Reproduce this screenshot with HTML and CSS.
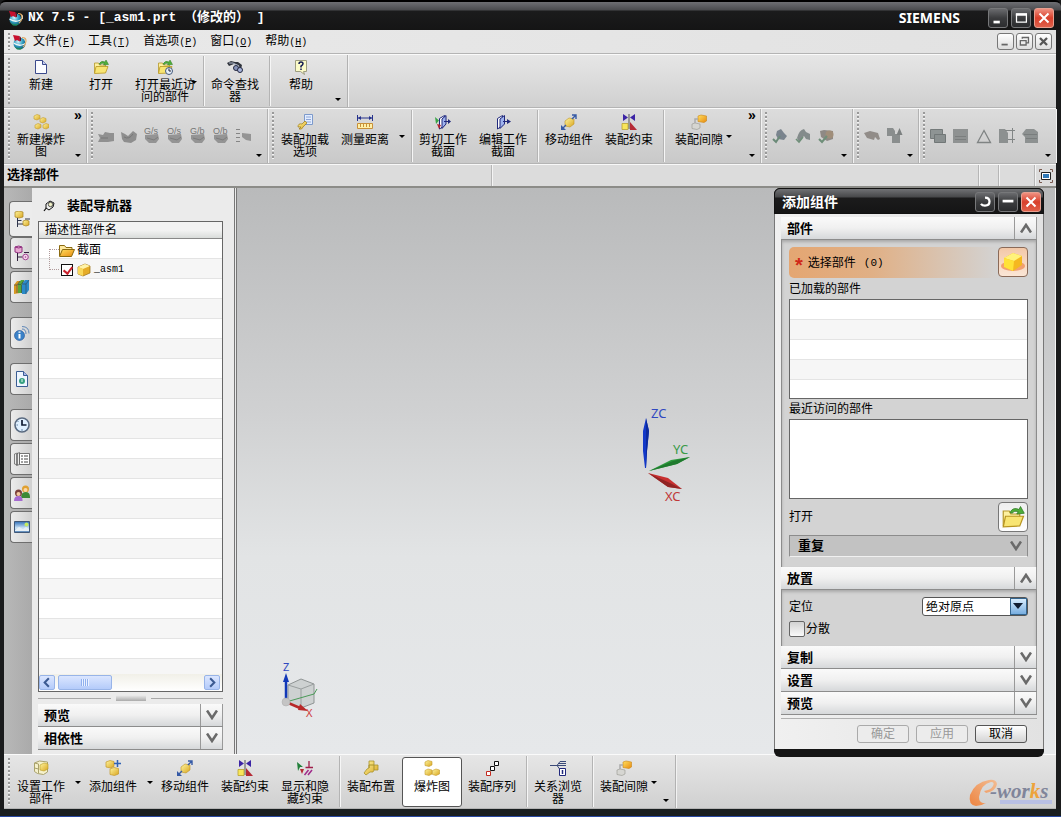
FILE: index.html
```html
<!DOCTYPE html>
<html lang="zh-CN">
<head>
<meta charset="utf-8">
<title>NX 7.5</title>
<link rel="stylesheet" href="styles.css">
</head>
<body>
<svg class="sprite" aria-hidden="true">
  <defs>
    <linearGradient id="gold" x1="0" y1="0" x2="1" y2="1"><stop offset="0" stop-color="#fff6a0"/><stop offset="1" stop-color="#d9a520"/></linearGradient>
    <linearGradient id="orange" x1="0" y1="0" x2="1" y2="1"><stop offset="0" stop-color="#ffe060"/><stop offset="1" stop-color="#e88a10"/></linearGradient>
    <linearGradient id="swoosh" x1="0" y1="1" x2="1" y2="0"><stop offset="0" stop-color="#ee8440"/><stop offset="1" stop-color="#f2bd94"/></linearGradient>
    <linearGradient id="sky" x1="0" y1="0" x2="0" y2="1"><stop offset="0" stop-color="#2f6fb8"/><stop offset=".6" stop-color="#cfe6f8"/><stop offset="1" stop-color="#4a7ab0"/></linearGradient>
    <radialGradient id="globe" cx=".4" cy=".35" r=".7"><stop offset="0" stop-color="#d8f4fa"/><stop offset=".5" stop-color="#36a3c4"/><stop offset="1" stop-color="#0a4f78"/></radialGradient>
  </defs>
  <symbol id="i-nx" viewBox="0 0 16 16"><circle cx="8.500" cy="9.500" r="6" fill="url(#globe)"/><path d="M3 12q4 4 9 1l-2 2.500H6z" fill="#1d8a58"/><path d="M2.500 9q5 3.500 10 1.500T14.500 5" stroke="#f0f6f8" stroke-width="1.300" fill="none"/><path d="M2 1l6.500 1 .5 5.500-3-1.500-2 1z" fill="#c8102e"/><path d="M8.500 2l1.500 1.500v3L9 7.500z" fill="#6a0818"/><path d="M11 3.500q4.500 0 4 4t-3 5.500" stroke="#e0a860" stroke-width="1.200" fill="none"/></symbol>
  <symbol id="i-new" viewBox="0 0 16 16"><path d="M2.500 1.500h7l4 4v9h-11z" fill="#fbfcff" stroke="#3b4a8c"/><path d="M9.500 1.500v4h4" fill="#c8d0f0" stroke="#3b4a8c"/></symbol>
  <symbol id="i-open" viewBox="0 0 16 16"><path d="M1.500 14V4h4l1 2h6v3" fill="#fdf0a0" stroke="#b5982c" stroke-width=".8"/><path d="M1.500 14.500l1.500-7h12l-2.500 6.500z" fill="#f8e573" stroke="#b89520" stroke-width=".8"/><path d="M6 5q2-4 6-2l1-2 2.500 4.500-5 .5 1-1.500q-3-1-4 1z" fill="#4fae3a" stroke="#2c7a22" stroke-width=".5"/></symbol>
  <symbol id="i-recent" viewBox="0 0 16 16"><use href="#i-open"/><circle cx="12" cy="12" r="3.500" fill="#e6f0fa" stroke="#44597a"/><path d="M12 9.500V12h2" stroke="#223" fill="none"/></symbol>
  <symbol id="i-find" viewBox="0 0 16 16"><path d="M0 4l4-2 4 1 3 0 4 3-1 4-3-4-4-1-5 2z" fill="#30343c"/><path d="M2 4l4 0 6 3" stroke="#aab4c8" fill="none"/><circle cx="9" cy="9" r="2.500" fill="#8793b8" stroke="#222840"/><circle cx="13" cy="11" r="2.500" fill="#aab6dd" stroke="#222840"/></symbol>
  <symbol id="i-help" viewBox="0 0 16 16"><path d="M2.500 1.500h11v11h-3l1 3-4-3h-5z" fill="#fbfbc8" stroke="#9d9d80"/><path d="M6 5q0-2 2-2t2 1.800q0 1.200-2 2.400v1.300M8 9.500v1.500" stroke="#111a50" stroke-width="1.500" fill="none"/></symbol>
  <symbol id="i-cube" viewBox="0 0 16 16"><path d="M2 5l7-3 5 2v7l-7 3-5-2z" fill="#e5ac28" stroke="#9a6f10" stroke-width=".7"/><path d="M2 5l7-3 5 2-7 3z" fill="#fff3a8"/><path d="M2 5l5 2v7l-5-2z" fill="#f9d85a"/></symbol>
  <symbol id="i-boxes" viewBox="0 0 16 16"><g fill="url(#gold)" stroke="#c49a2a" stroke-width=".6"><path d="M1 2l3-1.500 4 1v3.500L5 6.500 1 5.500z"/><path d="M1 10.500L4 9l4 1v4l-3 1.500-4-1z"/><path d="M8.500 10.500L12 9l3.500 1v4L12 15.500l-3.500-1z"/></g></symbol>
  <symbol id="i-explode" viewBox="0 0 16 16"><g fill="url(#gold)" stroke="#c49a2a" stroke-width=".6"><path d="M1 2l3-1.500 3 1v3l-3 1.500-3-1z"/><path d="M7 5l3-1.500 3 1v3l-3 1.500-3-1z"/><path d="M2 11l3-1.500 3 1v3l-3 1.500-3-1z"/><path d="M10 11l3-1.500 3 1v3l-3 1.500-3-1z"/></g></symbol>
  <symbol id="i-load" viewBox="0 0 16 16"><path d="M7.500 .5h8v10h-8z" fill="#e3edff" stroke="#7d9acb"/><path d="M9 3h5M9 5.500h5M9 8h5" stroke="#8ea6d6"/><path d="M1 13q0-4 4-3l3-3 2 2-4 4q-1 3-4 2l2-2z" fill="url(#gold)" stroke="#9c7a18" stroke-width=".7"/></symbol>
  <symbol id="i-measure" viewBox="0 0 16 16"><path d="M.5 1v6M15.500 1v6M1 4h14" stroke="#26328c" fill="none"/><path d="M1 4l3-2v4zM15 4l-3-2v4z" fill="#26328c"/><path d="M.5 9.500h15v5H.5z" fill="#fff0a8" stroke="#c8903a"/><path d="M3.500 10v3M6.500 10v3M9.500 10v3M12.500 10v3" stroke="#c8903a"/></symbol>
  <symbol id="i-section" viewBox="0 0 16 16"><path d="M2.500 4.500l5-3v10l-5 3.500z" fill="#fff" stroke="#20287c"/><path d="M5 5l4.500-3.500V10L5 14.500z" fill="#9fb3ee" stroke="#20287c"/><path d="M8 7h4V5l4 2.500-4 2.500V8H8z" fill="#20287c"/></symbol>
  <symbol id="i-clip" viewBox="0 0 16 16"><path d="M4.500 4.500l5-3v10l-5 3.500z" fill="#fff" stroke="#20287c"/><path d="M7 5l4-3.500V10l-4 4.500z" fill="#9fb3ee" stroke="#20287c"/><path d="M9 7h4V5l3 2.500-3 2.500V8H9z" fill="#20287c"/><path d="M0 3l4 3.500L1 10z" fill="#39a447"/><path d="M2 10l4 1-2 4z" fill="#b32330"/></symbol>
  <symbol id="i-move" viewBox="0 0 16 16"><path d="M4 7l4-3 5 1v5l-4 3-5-1z" fill="url(#gold)" stroke="#c09524" stroke-width=".6"/><path d="M11 5l4-4M11 1h4v4M5 11l-3 3" stroke="#365aa6" fill="none" stroke-width="1.400"/><path d="M0 11v5h5z" fill="#365aa6"/></symbol>
  <symbol id="i-constrain" viewBox="0 0 16 16"><path d="M2 0l5 3.500L2 7zM14 0L9 3.500 14 7z" fill="#3c24a5"/><path d="M8 0v15" stroke="#555"/><path d="M1 9.500h6v6H1z" fill="#f8e65a" stroke="#b8a230" stroke-width=".8"/><path d="M9 8l7 8H9z" fill="#b52a35"/></symbol>
  <symbol id="i-clear" viewBox="0 0 16 16"><path d="M7 2l3-1 5.500 1v5l-2.500 1.500L7 7.500z" fill="url(#orange)" stroke="#c98618" stroke-width=".6"/><path d="M1 10l3-1 5 1v4l-3 1.500-5-1z" fill="#d6d6d2" stroke="#96968f" stroke-width=".6"/><path d="M4 9V5h3" stroke="#aaa" stroke-width="1.500" fill="none"/></symbol>
  <symbol id="i-setwork" viewBox="0 0 16 16"><path d="M1.500 3l5-2 8 1v10l-4 2.500-6-1-3-2z" fill="#f5f1cc" stroke="#a9a26c"/><path d="M7 5l4-2 4 1v5l-4 2-4-1z" fill="url(#gold)" stroke="#b79a24" stroke-width=".6"/><path d="M1.500 3l4 1v9M5.500 9l-4-1" stroke="#a9a26c" fill="none"/></symbol>
  <symbol id="i-add" viewBox="0 0 16 16"><g fill="url(#gold)" stroke="#c49a2a" stroke-width=".7"><path d="M1 2l4-1.500 4 1v5L5.500 8 1 7z"/><path d="M5 9l4-1.500 4.500 1V14L9.500 15.500 5 14.500z"/></g><path d="M12.500 0v7M9 3.500h7" stroke="#2f62b5" stroke-width="1.500"/></symbol>
  <symbol id="i-showhide" viewBox="0 0 16 16"><path d="M0 2l6 5-3 0-2 4z" fill="#22803a"/><path d="M3 9h4l-2 5z" fill="#b52a35"/><path d="M12 1v6M8.500 7.500H16" stroke="#a01e4a" stroke-width="1.300"/><path d="M7.500 15l4-5M11 15l4-5" stroke="#a02a8a" stroke-width="1.500"/></symbol>
  <symbol id="i-arrange" viewBox="0 0 16 16"><path d="M6 5V1h5v4h4v5h-4l-1 2H7l-4 3-2-2 3-4 2-1z" fill="url(#gold)" stroke="#a8932c" stroke-width=".8"/><path d="M6 5h5v5M6 5v3" stroke="#a8932c" fill="none"/></symbol>
  <symbol id="i-sequence" viewBox="0 0 16 16"><path d="M10.500 1.500h4v4h-4z" fill="#fff" stroke="#111"/><path d="M6.500 6.500h4v4h-4z" fill="#fff" stroke="#111"/><path d="M2.500 11.500h4v4h-4z" fill="#fff" stroke="#c32a20"/></symbol>
  <symbol id="i-browse" viewBox="0 0 16 16"><path d="M0 5.500h7l3-4h6M7 5.500h9M7 5.500l3 4M9 3.500h7" stroke="#3a4a78" fill="none"/><path d="M9.500 8.500h6v7h-6z" fill="#fff" stroke="#20287c"/><path d="M12.500 10v4" stroke="#20287c" stroke-width="1.500"/></symbol>
  <symbol id="g-hand" viewBox="0 0 16 16"><path d="M0 6l5 1 2-3 5 1 4 0v8l-6 1H0l2-4z" fill="#909090"/><path d="M3 10h7" stroke="#777"/></symbol>
  <symbol id="g-cup" viewBox="0 0 16 16"><path d="M0 4l4 2 3 2 5-5 4 3-1 6-5 3-7-1-2-3z" fill="#8e8e8e"/><path d="M3 9q5 3 9-3" stroke="#777" fill="none"/></symbol>
  <symbol id="g-ball" viewBox="0 0 16 16"><path d="M1 7l13-1 1 5-3 4H5l-4-4z" fill="#949494"/><path d="M3 10l7 2 4-3" stroke="#7c7c7c" fill="none"/></symbol>
  <symbol id="g-list" viewBox="0 0 16 16"><path d="M0 1.500h4M0 5.500h4M0 9.500h4M0 13.500h4" stroke="#858585"/><path d="M6 5l9 1v7l-5-1-4-3z" fill="#949494"/></symbol>
  <symbol id="g-check1" viewBox="0 0 16 16"><path d="M5 3l4-2 3 4 3 3-3 4-6-1-2-4z" fill="#7a848e"/><path d="M1 11l3 3 4-6" stroke="#6b8a78" stroke-width="2" fill="none"/></symbol>
  <symbol id="g-check2" viewBox="0 0 16 16"><path d="M2 10q2-8 7-9l2 3 4 2 0 6-4-1-2-3-5 6z" fill="#838b8b"/><path d="M1 11l3 3 4-5" stroke="#6f8f79" stroke-width="1.600" fill="none"/></symbol>
  <symbol id="g-check3" viewBox="0 0 16 16"><path d="M2 3l4-1 9 1v8l-6 2-6-4z" fill="#8e8985"/><circle cx="11.500" cy="6.500" r="4" fill="#a08e7a"/><path d="M1 11l3 3 5-6" stroke="#6f8f79" stroke-width="2" fill="none"/></symbol>
  <symbol id="g-part" viewBox="0 0 16 16"><path d="M0 5l6-2 8 2 2 6-2 1-3-3-1 3-7-2z" fill="#918c88"/></symbol>
  <symbol id="g-copy" viewBox="0 0 16 16"><path d="M0 0h6l2 3v3h5v9H5V8H0z" fill="#8a8e8e"/><path d="M12.500 0l3 7h-6z" fill="#7c8080"/></symbol>
  <symbol id="g-layer" viewBox="0 0 16 16"><path d="M.5 1.500h12v9H.5z" fill="#8e9494" stroke="#747a7a"/><path d="M4.500 6.500h11v8h-11z" fill="#8a9090" stroke="#717777"/></symbol>
  <symbol id="g-block" viewBox="0 0 16 16"><path d="M0 1h15v14H0z" fill="#8f9292"/><path d="M2 8.500h11M2 11.500h11" stroke="#7b7e7e"/></symbol>
  <symbol id="g-tri" viewBox="0 0 16 16"><path d="M8 2.500l6.500 12h-13z" fill="none" stroke="#7f8383" stroke-width="1.300"/></symbol>
  <symbol id="g-trim" viewBox="0 0 16 16"><path d="M0 1h6l3 4v10H0z" fill="#8c9090"/><path d="M6 2.500h10M9 11.500h7M13.500 0v15" stroke="#818585"/></symbol>
  <symbol id="g-stack" viewBox="0 0 16 16"><path d="M0 6l4-5h8l4 3v11H3V9z" fill="#8d9191"/><path d="M2 6.500h13M4 10.500h11" stroke="#797d7d"/></symbol>
  <symbol id="i-full" viewBox="0 0 16 16"><path d="M1.500 4V1.500H4M12 1.500h2.500V4M14.500 12v2.500H12M4 14.500H1.500V12" stroke="#7a5a50" fill="none"/><path d="M3.500 4.500h9v7h-9z" fill="#fff" stroke="#222"/><path d="M5 6h6v4H5z" fill="#2f79b8"/></symbol>
  <symbol id="i-asm" viewBox="0 0 16 16"><path d="M1 1l4-1 4 1v5l-4 1-4-1z" fill="url(#gold)" stroke="#a8811c" stroke-width=".7"/><path d="M3.500 7v9M3.500 13h6M3.500 9.500h4M11 8h5" stroke="#30364c" fill="none"/><path d="M9 10l3-1 3 1v4l-3 1-3-1z" fill="url(#gold)" stroke="#a8811c" stroke-width=".7"/></symbol>
  <symbol id="i-cnav" viewBox="0 0 16 16"><path d="M1 2q4-2 7 0v5q-3 2-7 0z" fill="#e6a8d0" stroke="#903080"/><path d="M1 2q4 2 7 0" stroke="#903080" fill="none"/><path d="M3.500 8v8M3.500 12h5M10 7.500h5" stroke="#30203c" fill="none"/><circle cx="11.500" cy="12" r="2.800" fill="#f4d8ec" stroke="#a04090"/><circle cx="11.500" cy="12" r=".8" fill="#a04090"/></symbol>
  <symbol id="i-books" viewBox="0 0 16 16"><path d="M0 6l3-4h3v12l-6 1z" fill="#d89820"/><path d="M4 5l3-4h3l-2 13H4z" fill="#58a838"/><path d="M8 5l3-4h4v10l-3 4H8z" fill="#2a8ac8"/><path d="M0 6h3l3-4M4 5.500h3l3-4M8 5h4l3-4M12 5v10M7.500 6v8M3 6v8" stroke="#345" stroke-width=".6" fill="none"/></symbol>
  <symbol id="i-info" viewBox="0 0 16 16"><circle cx="5.500" cy="10.500" r="5" fill="#3b82c8" stroke="#1e4f94" stroke-width=".6"/><path d="M5.500 9v4.500M5.500 6.500v1.300" stroke="#fff" stroke-width="2"/><path d="M8 4q4 0 4 5M8 1.500q7 0 7 7" stroke="#6088b8" fill="none"/></symbol>
  <symbol id="i-page" viewBox="0 0 16 16"><path d="M2.500 .5h7l4 4v11h-11z" fill="#eef6ff" stroke="#3a5d94"/><path d="M9.500 .5v4h4" fill="#a9b6ea" stroke="#3a5d94"/><circle cx="8" cy="10" r="3" fill="#36a080"/><path d="M8 8v3" stroke="#e8fff4"/></symbol>
  <symbol id="i-clock" viewBox="0 0 16 16"><circle cx="8" cy="8" r="7" fill="#e0f0ff" stroke="#5a6a80" stroke-width="1.600"/><path d="M8 3v5h4.500" stroke="#101c34" stroke-width="1.700" fill="none"/><path d="M8 12v2M2.500 8h1.500M12 12l1 1M4 12l-1 1M3.500 4l1 1" stroke="#68a"/></symbol>
  <symbol id="i-roles" viewBox="0 0 16 16"><path d="M.5 3l3-1v12l-3-1zM2.500 3l3-1.500v12l-3 1z" fill="#eee" stroke="#666" stroke-width=".8"/><path d="M5.500 2.500h10v11h-10z" fill="#fff" stroke="#555" stroke-width=".8"/><path d="M7 5h2M7 8h2M7 11h2M10 5h4M10 8h4M10 11h4" stroke="#444"/></symbol>
  <symbol id="i-people" viewBox="0 0 16 16"><circle cx="11.500" cy="4" r="3.500" fill="#e0a030"/><circle cx="11.500" cy="5" r="2" fill="#fbd8a8"/><path d="M7 13q0-6 4.500-6T16 12v1z" fill="#3b8a35"/><circle cx="4.500" cy="8" r="3.500" fill="#7a3f3a"/><circle cx="4.500" cy="9" r="2" fill="#f4c8a0"/><path d="M0 16q0-5 4.500-5T8.500 16z" fill="#a56ad0"/></symbol>
  <symbol id="i-photo" viewBox="0 0 16 16"><path d="M.5 2.500h15v11H.5z" fill="url(#sky)" stroke="#405878"/><path d="M1 11l4-3 4 2 3-2 3 2v2H1z" fill="#e7f0f6"/><circle cx="12.500" cy="5.500" r="2" fill="#c5ec60"/></symbol>
  <symbol id="i-pin" viewBox="0 0 12 12"><path d="M1 11l3-4" stroke="#111" stroke-width="1.200"/><path d="M3 4l4-3 4 2-1 4-4 3-3-2z" fill="#eee" stroke="#111"/><circle cx="7.500" cy="4.500" r="2.200" fill="#f3f3c8" stroke="#333" stroke-width=".8"/></symbol>
  <symbol id="i-folder" viewBox="0 0 16 14"><path d="M.5 13V2.500h5l1.500 2h6V7" fill="#ffe9a0" stroke="#8a6a10"/><path d="M.5 13.500l3-7h12l-3 7z" fill="url(#orange)" stroke="#8a6a10"/></symbol>
  <symbol id="i-down" viewBox="0 0 12 10"><path d="M1 .5l5 7.500 5-7.500" fill="none" stroke="#6a6a6a" stroke-width="2.600"/></symbol>
  <symbol id="i-up" viewBox="0 0 12 10"><path d="M1 9.500L6 2l5 7.500" fill="none" stroke="#6a6a6a" stroke-width="2.600"/></symbol>
  <symbol id="w-min" viewBox="0 0 20 20"><path d="M5 13h7v3H5z" fill="#fff"/></symbol>
  <symbol id="w-max" viewBox="0 0 20 20"><path d="M5 5.500h11v9H5z" fill="none" stroke="#fff" stroke-width="1.400"/><path d="M4.300 5h12.400v2.500H4.300z" fill="#fff"/></symbol>
  <symbol id="w-close" viewBox="0 0 20 20"><path d="M5 5l10 10M15 5L5 15" stroke="#fff" stroke-width="2.200"/></symbol>
  <symbol id="w-reset" viewBox="0 0 20 20"><path d="M10 5q5 0 5 4.500T10 14q-3 0-4.500-2" stroke="#fff" stroke-width="2.500" fill="none"/></symbol>
  <symbol id="w-dash" viewBox="0 0 20 20"><path d="M4 7.500h12v3H4z" fill="#fff"/></symbol>
</svg>

<header class="titlebar">
  <svg class="icon"><use href="#i-nx"/></svg>
  <h1>NX 7.5 - [_asm1.prt （修改的） ]</h1>
  <span class="brand">SIEMENS</span>
  <div class="win-buttons">
    <button class="win" aria-label="最小化"><svg><use href="#w-min"/></svg></button>
    <button class="win" aria-label="最大化"><svg><use href="#w-max"/></svg></button>
    <button class="win close" aria-label="关闭"><svg><use href="#w-close"/></svg></button>
  </div>
</header>

<nav class="menubar">
  <span class="grip"></span>
  <svg class="icon"><use href="#i-nx"/></svg>
  <button>文件<span>(<u>F</u>)</span></button>
  <button>工具<span>(<u>T</u>)</span></button>
  <button>首选项<span>(<u>P</u>)</span></button>
  <button>窗口<span>(<u>O</u>)</span></button>
  <button>帮助<span>(<u>H</u>)</span></button>
  <div class="mdi">
    <button aria-label="最小化文档"><svg viewBox="0 0 17 17"><path d="M4 11h7v2H4z" fill="#666"/></svg></button>
    <button aria-label="还原文档"><svg viewBox="0 0 17 17"><path d="M6 5.500V4h7v6h-2M3.800 7.500h6.500v5H3.800z" fill="none" stroke="#666" stroke-width="1.500"/></svg></button>
    <button aria-label="关闭文档"><svg viewBox="0 0 17 17"><path d="M4.500 4.500l8 8M12.500 4.500l-8 8" stroke="#555" stroke-width="2.600"/></svg></button>
  </div>
</nav>

<div class="toolrow">
  <div class="bar">
    <span class="grip"></span>
    <button class="tool"><svg class="icon"><use href="#i-new"/></svg>新建</button>
    <button class="tool"><svg class="icon"><use href="#i-open"/></svg>打开</button>
    <button class="tool wide"><svg class="icon"><use href="#i-recent"/></svg>打开最近访<br>问的部件</button>
    <button class="drop over" aria-label="更多最近部件"></button>
    <span class="sep"></span>
    <button class="tool"><svg class="icon"><use href="#i-find"/></svg>命令查找<br>器</button>
    <span class="sep before"></span>
    <button class="tool"><svg class="icon"><use href="#i-help"/></svg>帮助</button>
    <button class="more" aria-label="工具条选项"><i></i></button>
  </div>
</div>

<div class="toolrow second">
  <div class="bar">
    <span class="grip"></span>
    <button class="tool"><svg class="icon"><use href="#i-explode"/></svg>新建爆炸<br>图</button>
    <button class="more" aria-label="工具条选项"><b>»</b><i></i></button>
  </div>
  <div class="bar">
    <span class="grip"></span>
    <div class="minis">
      <button aria-label="截面1"><svg class="icon"><use href="#g-hand"/></svg></button>
      <button aria-label="截面2"><svg class="icon"><use href="#g-cup"/></svg></button>
      <button><svg class="icon lettered"><use href="#g-ball"/><text x="0" y="6">G/s</text></svg></button>
      <button><svg class="icon lettered"><use href="#g-ball"/><text x="0" y="6">O/s</text></svg></button>
      <button><svg class="icon lettered"><use href="#g-ball"/><text x="0" y="6">G/b</text></svg></button>
      <button><svg class="icon lettered"><use href="#g-ball"/><text x="0" y="6">O/b</text></svg></button>
      <button aria-label="列表"><svg class="icon"><use href="#g-list"/></svg></button>
    </div>
    <button class="more" aria-label="工具条选项"><i></i></button>
  </div>
  <div class="bar">
    <span class="grip"></span>
    <button class="tool"><svg class="icon"><use href="#i-load"/></svg>装配加载<br>选项</button>
    <button class="tool"><svg class="icon"><use href="#i-measure"/></svg>测量距离</button>
    <button class="drop" aria-label="更多测量"></button>
    <span class="sep before"></span>
    <button class="tool"><svg class="icon"><use href="#i-clip"/></svg>剪切工作<br>截面</button>
    <button class="tool"><svg class="icon"><use href="#i-section"/></svg>编辑工作<br>截面</button>
    <span class="sep before"></span>
    <button class="tool"><svg class="icon"><use href="#i-move"/></svg>移动组件</button>
    <button class="tool"><svg class="icon"><use href="#i-constrain"/></svg>装配约束</button>
    <span class="sep before after"></span>
    <button class="tool"><svg class="icon"><use href="#i-clear"/></svg>装配间隙</button>
    <button class="drop tight" aria-label="更多间隙"></button>
    <button class="more apart" aria-label="工具条选项"><b>»</b><i></i></button>
  </div>
  <div class="bar">
    <span class="grip"></span>
    <div class="minis roomy">
      <button aria-label="检查1"><svg class="icon"><use href="#g-check1"/></svg></button>
      <button aria-label="检查2"><svg class="icon"><use href="#g-check2"/></svg></button>
      <button aria-label="检查3"><svg class="icon"><use href="#g-check3"/></svg></button>
    </div>
    <button class="more" aria-label="工具条选项"><i></i></button>
  </div>
  <div class="bar">
    <span class="grip"></span>
    <div class="minis">
      <button aria-label="部件"><svg class="icon"><use href="#g-part"/></svg></button>
      <button aria-label="复制"><svg class="icon"><use href="#g-copy"/></svg></button>
    </div>
    <button class="more" aria-label="工具条选项"><i></i></button>
  </div>
  <div class="bar last">
    <span class="grip"></span>
    <div class="minis">
      <button aria-label="图层"><svg class="icon"><use href="#g-layer"/></svg></button>
      <button aria-label="块"><svg class="icon"><use href="#g-block"/></svg></button>
      <button aria-label="三角"><svg class="icon"><use href="#g-tri"/></svg></button>
      <button aria-label="修剪"><svg class="icon"><use href="#g-trim"/></svg></button>
      <button aria-label="叠层"><svg class="icon"><use href="#g-stack"/></svg></button>
    </div>
    <button class="more" aria-label="工具条选项"><i></i></button>
  </div>
</div>

<div class="prompt">
  <strong>选择部件</strong>
  <span class="status"></span>
  <span class="cell"></span>
  <span class="cell long"></span>
  <button aria-label="全屏"><svg class="icon"><use href="#i-full"/></svg></button>
</div>

<main class="workspace">
  <div class="tabs">
    <button class="tab active" aria-label="装配导航器"><svg class="icon"><use href="#i-asm"/></svg></button>
    <button class="tab" aria-label="约束导航器"><svg class="icon"><use href="#i-cnav"/></svg></button>
    <button class="tab" aria-label="重用库"><svg class="icon"><use href="#i-books"/></svg></button>
    <button class="tab spaced" aria-label="浏览器"><svg class="icon"><use href="#i-info"/></svg></button>
    <button class="tab spaced" aria-label="历史"><svg class="icon"><use href="#i-page"/></svg></button>
    <button class="tab spaced" aria-label="时钟"><svg class="icon"><use href="#i-clock"/></svg></button>
    <button class="tab" aria-label="材料"><svg class="icon"><use href="#i-roles"/></svg></button>
    <button class="tab" aria-label="角色"><svg class="icon"><use href="#i-people"/></svg></button>
    <button class="tab" aria-label="场景"><svg class="icon"><use href="#i-photo"/></svg></button>
  </div>

  <aside class="navigator">
    <h2><svg><use href="#i-pin"/></svg>装配导航器</h2>
    <div class="tree">
      <div class="tree-head">描述性部件名</div>
      <div class="tree-rows">
        <div class="row"><svg class="icon"><use href="#i-folder"/></svg><span>截面</span></div>
        <label class="row second-row"><input type="checkbox" class="tick" checked><svg class="icon"><use href="#i-cube"/></svg><span class="mono">_asm1</span></label>
      </div>
      <div class="scroll">
        <button aria-label="向左滚动"><svg viewBox="0 0 14 14"><path d="M9 2.500L4.500 7 9 11.500" fill="none" stroke="#3b5a92" stroke-width="2.200"/></svg></button>
        <span class="thumb"><i></i></span>
        <button class="end" aria-label="向右滚动"><svg viewBox="0 0 14 14"><path d="M5 2.500L9.500 7 5 11.500" fill="none" stroke="#3b5a92" stroke-width="2.200"/></svg></button>
      </div>
    </div>
    <div class="pull"><i></i></div>
    <button class="fold">预览<span><svg><use href="#i-down"/></svg></span></button>
    <button class="fold">相依性<span><svg><use href="#i-down"/></svg></span></button>
  </aside>

  <section class="canvas">
    <svg class="wcs" viewBox="0 0 70 110">
      <path d="M11 14l3 13-2 20-1 17h-1L8 47V27z" fill="#1238c8"/><path d="M11 14l3 13-2 20-1 17z" fill="#0c2a9c"/>
      <path d="M14 67l22-11 19-3-13 7z" fill="#2d9a3e"/><path d="M14 67l28-7 13-7-17 4z" fill="#1f7a2e"/>
      <path d="M13 69l20 5 14 11-14-2z" fill="#c83030"/><path d="M13 69l20 14 14 2-12-6z" fill="#902424"/>
      <text x="16" y="14" fill="#3048c0">ZC</text>
      <text x="38" y="50" fill="#3a9a48">YC</text>
      <text x="30" y="97" fill="#c03838">XC</text>
    </svg>
    <svg class="view-triad" viewBox="0 0 40 64">
      <path d="M8 28l13-6 13 5v19l-13 5-13-5z" fill="#cdd1d1" stroke="#8f9494"/>
      <path d="M8 28l13 4 13-5M21 32v19" stroke="#9a9f9f" fill="none"/>
      <path d="M6 45l28-8 3-5" stroke="#4a9a58" fill="none"/>
      <path d="M6 45V24" stroke="#1238b8" stroke-width="2.500"/><path d="M3 25l3-9 3 9z" fill="#1238b8"/>
      <path d="M6 45l14 6" stroke="#b82828" stroke-width="2.500"/><path d="M20 47l8 7-10-1z" fill="#b82828"/>
      <circle cx="6" cy="45" r="4" fill="#c4c4c4" stroke="#aaa" stroke-width=".5"/>
      <text x="3" y="14" fill="#3048c0">Z</text>
      <text x="26" y="60" fill="#d04040">X</text>
    </svg>

    <section class="dialog" aria-label="添加组件">
      <header>
        <h2>添加组件</h2>
        <button class="win" aria-label="重置"><svg><use href="#w-reset"/></svg></button>
        <button class="win" aria-label="折叠"><svg><use href="#w-dash"/></svg></button>
        <button class="win close" aria-label="关闭"><svg><use href="#w-close"/></svg></button>
      </header>
      <div class="dialog-body">
        <button class="fold">部件<span><svg><use href="#i-up"/></svg></span></button>
        <div class="group">
          <div class="pick">
            <div class="pick-label"><b>*</b>选择部件<span class="mono">(0)</span></div>
            <button class="big hot" aria-label="选择部件"><svg viewBox="0 0 24 24"><ellipse cx="12" cy="16" rx="12" ry="5" fill="#f2a070"/><path d="M3 8l9-5 9 3v9l-9 6-9-4z" fill="#f5b820"/><path d="M3 8l9-5 9 3-8 5z" fill="#fff27a"/><path d="M3 8l10 3-1 10-9-4z" fill="#ffe238"/></svg></button>
          </div>
          <div class="caption">已加载的部件</div>
          <div class="list striped" role="listbox" aria-label="已加载的部件"></div>
          <div class="caption">最近访问的部件</div>
          <div class="list" role="listbox" aria-label="最近访问的部件"></div>
          <div class="open-row">打开<button class="big" aria-label="打开"><svg><use href="#i-open"/></svg></button></div>
          <button class="repeat">重复<svg><use href="#i-down"/></svg></button>
        </div>
        <button class="fold">放置<span><svg><use href="#i-up"/></svg></span></button>
        <div class="group placement">
          <div class="field">
            <label for="pos">定位</label>
            <div class="combo"><select id="pos"><option>绝对原点</option></select><i></i></div>
          </div>
          <label class="scatter"><input type="checkbox">分散</label>
        </div>
        <button class="fold">复制<span><svg><use href="#i-down"/></svg></span></button>
        <button class="fold">设置<span><svg><use href="#i-down"/></svg></span></button>
        <button class="fold">预览<span><svg><use href="#i-down"/></svg></span></button>
        <div class="actions">
          <button disabled>确定</button>
          <button disabled>应用</button>
          <button class="ready">取消</button>
        </div>
      </div>
    </section>
  </section>
</main>

<footer class="toolrow bottom">
  <div class="bar">
    <span class="grip"></span>
    <button class="tool"><svg class="icon"><use href="#i-setwork"/></svg>设置工作<br>部件</button>
    <button class="drop" aria-label="更多"></button>
    <button class="tool"><svg class="icon"><use href="#i-add"/></svg>添加组件</button>
    <button class="drop" aria-label="更多"></button>
    <button class="tool"><svg class="icon"><use href="#i-move"/></svg>移动组件</button>
    <button class="tool"><svg class="icon"><use href="#i-constrain"/></svg>装配约束</button>
    <button class="tool"><svg class="icon"><use href="#i-showhide"/></svg>显示和隐<br>藏约束</button>
    <span class="sep before"></span>
    <button class="tool"><svg class="icon"><use href="#i-arrange"/></svg>装配布置</button>
    <button class="tool active"><svg class="icon"><use href="#i-boxes"/></svg>爆炸图</button>
    <button class="tool"><svg class="icon"><use href="#i-sequence"/></svg>装配序列</button>
    <span class="sep before"></span>
    <button class="tool"><svg class="icon"><use href="#i-browse"/></svg>关系浏览<br>器</button>
    <span class="sep before"></span>
    <button class="tool"><svg class="icon"><use href="#i-clear"/></svg>装配间隙</button>
    <button class="drop tight" aria-label="更多"></button>
    <button class="more" aria-label="工具条选项"><i></i></button>
  </div>
  <svg class="logo" viewBox="0 0 88 32">
    <path d="M30 8q-1-5-8-4Q8 6 3 19q-2 10 6 11 5 0 10-3-7 1-7-6Q14 8 24 6q4 0 2 4-2 4-9 5l2 2q10-2 11-9z" fill="url(#swoosh)"/>
    <path d="M33 24h52v4H33z" fill="#b9c0e4"/>
    <text x="23" y="22" fill="#80859a">-wor<tspan fill="#eda33c">k</tspan>s</text>
  </svg>
</footer>
<div class="desktop-edge"></div>
</body>
</html>
```
FILE: styles.css
```css
* { box-sizing: border-box; }

html { background: #161718; }

body {
  margin: 0;
  min-height: 100vh;
  display: flex;
  flex-direction: column;
  background: #1a1b1c;
  color: #000;
  font: 12px/12px "Liberation Sans", "Noto Sans CJK SC", sans-serif;
}

button, select, input { font: inherit; color: inherit; margin: 0; }
button { border: 0; padding: 0; background: none; }
h1, h2 { margin: 0; font-size: 13px; }

.sprite { position: absolute; width: 0; height: 0; }
.icon { display: block; width: 16px; height: 16px; flex: none; }

/* Title bar */
.titlebar {
  display: flex;
  align-items: center;
  height: 30px;
  padding: 3px 7px 0 7px;
  border-top: 2px solid #000;
  border-radius: 6px 6px 0 0;
  background: linear-gradient(#6e6f73, #4a4b4e 8px, #1b1b1c 9px, #151515);
  color: #fff;
}
.titlebar h1 {
  margin-left: 5px;
  font-family: "Liberation Mono", "Noto Sans CJK SC", monospace;
  white-space: pre;
}
.brand {
  margin-left: auto;
  margin-right: 28px;
  font: bold 14px/16px "Noto Sans", sans-serif;
}
.win-buttons { display: flex; gap: 3px; }
.win {
  width: 20px;
  height: 20px;
  border: 1px solid #77787a;
  border-radius: 3px;
  background: linear-gradient(#6a6b6e, #3b3c3e 50%, #2b2c2e);
}
.win svg { display: block; width: 18px; height: 18px; }
.win.close { background: linear-gradient(#f09080, #d8402c 50%, #e0604a); border-color: #e8a090; }

/* Menu bar */
.menubar {
  display: flex;
  align-items: center;
  height: 24px;
  margin: 0 5px 0 4px;
  padding: 0 4px;
  border-bottom: 1px solid #b4b4b4;
  background: linear-gradient(90deg, #e9e9e9, #e2e2e2);
}
.menubar > .icon { margin: 0 6px 0 0; }
.menubar > button { margin-right: 13px; padding-top: 1px; white-space: nowrap; }
.menubar > button span { font: 10px/12px "Liberation Mono", monospace; }
.mdi { display: flex; gap: 2px; margin-left: auto; }
.mdi button {
  width: 17px;
  height: 17px;
  border: 1px solid #777;
  border-radius: 3px;
  background: linear-gradient(#fff, #ddd);
}
.mdi svg { display: block; width: 15px; height: 15px; }

.grip {
  flex: none;
  width: 2px;
  margin: 3px 1px 3px 0;
  align-self: stretch;
  background: repeating-linear-gradient(#999 0 2px, #f4f4f4 2px 3px, transparent 3px 4px);
}

/* Tool bars */
.toolrow {
  display: flex;
  margin: 0 5px 0 4px;
  background: linear-gradient(#e6e6e6, #d0d0d0);
  border-top: 1px solid #fafafa;
  border-bottom: 1px solid #b4b4b4;
  min-height: 54px;
}
.toolrow.second { min-height: 56px; background: linear-gradient(#dcdcdc, #c9c9c9); }
.toolrow.bottom { min-height: 55px; }
.bar {
  display: flex;
  padding: 0 2px 0 4px;
  border-right: 1px solid #b2b2b2;
  box-shadow: 1px 0 #f2f2f2;
}
.bar.last { flex: 1; border: 0; }
.bar.last .more { margin-left: auto; }
.second .bar { padding-right: 1px; }
.second .bar + .bar { margin-left: 1px; padding-left: 3px; }
.tool {
  display: flex;
  flex-direction: column;
  align-items: center;
  width: 60px;
  padding-top: 4px;
  text-align: center;
  white-space: nowrap;
}
.second .tool { padding-top: 5px; }
.bottom .tool { padding-top: 5px; }
.tool .icon { margin-bottom: 4px; }
.bottom .tool .icon { margin-bottom: 5px; }
.tool.wide { width: 68px; }
.bottom .tool.active {
  margin: 2px 0 1px 1px;
  padding-top: 2px;
  border: 1px solid #555;
  border-radius: 3px;
  background: #fff;
}
.sep { width: 2px; margin: 1px 0; background: linear-gradient(90deg, #b4b4b4 50%, #f6f6f6 50%); }
.sep.before { margin-left: 4px; }
.sep.after { margin-right: 4px; }
.drop { width: 12px; position: relative; }
.drop::before, .more i {
  content: "";
  display: block;
  width: 0;
  border: 3px solid transparent;
  border-top-color: #000;
  border-bottom: 0;
}
.drop::before { position: absolute; left: 4px; top: 26px; }
.drop.tight { margin-left: -7px; }
.drop.over { margin-left: -12px; margin-right: 4px; }
.more {
  display: flex;
  flex-direction: column;
  justify-content: flex-end;
  align-items: center;
  width: 14px;
  padding: 1px 0 6px;
}
.more b { margin-bottom: auto; font: bold 14px/11px "Liberation Sans", sans-serif; }
.more.apart { margin-left: 11px; }
.minis { display: flex; align-items: center; gap: 7px; padding-left: 4px; }
.minis.roomy { margin-right: 3px; }
.lettered { overflow: visible; }
.lettered text { fill: #757575; font: 9px "Liberation Sans", sans-serif; }

/* Prompt line */
.prompt {
  display: flex;
  align-items: stretch;
  height: 22px;
  margin: 0 5px 0 4px;
  background: #dcdcdc;
  border-top: 1px solid #f8f8f8;
}
.prompt strong { flex: 1; padding: 4px 3px; font-size: 13px; }
.prompt .status { width: 487px; }
.prompt .cell { width: 20px; }
.prompt .long { width: 36px; }
.prompt span, .prompt button { border-left: 1px solid #b6b6b6; box-shadow: inset 1px 0 #f4f4f4; }
.prompt button { padding: 0 2px 0 3px; }

/* Workspace */
.workspace {
  flex: 1;
  display: flex;
  margin: 0 5px 0 4px;
  border-top: 2px solid #8c8c88;
}
.tabs {
  display: flex;
  flex-direction: column;
  gap: 2px;
  width: 28px;
  padding: 13px 0 0 6px;
  background: linear-gradient(90deg, #b8b8b8, #aaa);
}
.tab {
  height: 32px;
  padding-left: 3px;
  border: 1px solid #6e6e6e;
  border-right: 0;
  border-radius: 4px 0 0 4px;
  background: linear-gradient(90deg, #ececec, #d0d0d0);
}
.tab.active { height: 36px; margin: 0 0 -2px -1px; padding-left: 4px; background: #ececec; }
.tab.spaced { margin-top: 12px; }

.navigator {
  display: flex;
  flex-direction: column;
  width: 205px;
  padding: 0 11px 4px 6px;
  background: #ebebeb;
  border-right: 3px double #777;
}
.navigator h2 { display: flex; align-items: center; height: 33px; padding: 2px 0 0 5px; }
.navigator h2 svg { width: 12px; height: 12px; margin-right: 12px; }
.tree {
  flex: 1;
  display: flex;
  flex-direction: column;
  border: 1px solid #666;
  background: #fff;
}
.tree-head {
  height: 17px;
  padding: 2px 6px;
  border-bottom: 1px solid #888;
  background: linear-gradient(#f3f3f3 50%, #d9dcda);
}
.tree-rows {
  flex: 1;
  background: repeating-linear-gradient(#fff 0 19px, #e4e4e4 19px 20px, #f6f6f6 20px 39px, #e4e4e4 39px 40px);
}
.row { position: relative; display: flex; align-items: center; height: 20px; padding: 1px 0 0 20px; }
.row .icon { margin-right: 2px; }
.row::before {
  content: "";
  position: absolute;
  left: 10px;
  top: 10px;
  width: 9px;
  height: 20px;
  border: 1px dotted #b09a9a;
  border-right: 0;
  border-bottom: 0;
}
.second-row { padding-left: 22px; }
.second-row::before { height: 0; }
.tick {
  appearance: none;
  width: 12px;
  height: 12px;
  margin-right: 3px;
  border: 1px solid #111;
  background: #fff;
  position: relative;
}
.tick:checked::after {
  content: "";
  position: absolute;
  left: 3px;
  top: 0;
  width: 4px;
  height: 7px;
  border: solid #c8202c;
  border-width: 0 2px 2px 0;
  transform: rotate(38deg);
}
.mono { font: 10px/12px "Liberation Mono", monospace; }
.scroll { display: flex; align-items: center; height: 17px; padding: 0 2px 0 0; background: linear-gradient(#f1f0e8, #fff); }
.scroll button, .thumb {
  width: 16px;
  height: 15px;
  border: 1px solid #98b4e8;
  border-radius: 2px;
  background: linear-gradient(#dbe6ff, #b4cbfa);
}
.scroll svg { display: block; width: 14px; height: 13px; }
.thumb { width: 54px; margin-left: 3px; }
.thumb i {
  display: block;
  width: 8px;
  height: 7px;
  margin: 3px auto;
  background: repeating-linear-gradient(90deg, #8fb0ee 0 1px, #eaf1ff 1px 2px);
}
.scroll .end { margin-left: auto; }
.pull {
  display: flex;
  align-items: center;
  justify-content: center;
  height: 12px;
  background: linear-gradient(#a8a8a8, #a8a8a8) center / 100% 1px no-repeat;
}
.pull i {
  width: 40px;
  height: 6px;
  border: solid #ebebeb;
  border-width: 0 5px;
  background: linear-gradient(#eee, #aaa) padding-box;
}

/* Collapsible section headings */
.fold {
  display: flex;
  align-items: stretch;
  width: 100%;
  height: 23px;
  padding-left: 6px;
  border-bottom: 1px solid #8c8c8c;
  background: linear-gradient(#fafafa, #f0f0f0 50%, #d6d8da);
  font: bold 13px/23px "Liberation Sans", "Noto Sans CJK SC", sans-serif;
}
.fold span {
  display: flex;
  align-items: center;
  justify-content: center;
  width: 23px;
  margin-left: auto;
  border-left: 1px solid #999;
  border-right: 1px solid #999;
}
.fold svg, .repeat svg { width: 12px; height: 10px; }

/* Graphics area */
.canvas {
  position: relative;
  flex: 1;
  border-right: 1px solid #f4f4f4;
  background: linear-gradient(#b9babb, #d0d1d2 40%, #e2e4e5 65%, #e6e8ea);
}
.wcs { position: absolute; left: 398px; top: 216px; width: 70px; height: 110px; font: 13px "Noto Sans", sans-serif; }
.view-triad { position: absolute; left: 43px; bottom: 33px; width: 40px; height: 64px; font: 11px "Noto Sans", sans-serif; }

/* Floating dialog */
.dialog {
  position: absolute;
  z-index: 2;
  top: 0;
  right: 11px;
  width: 270px;
  border-bottom: 8px solid #151515;
  border-radius: 6px;
  background: #151515;
}
.dialog header {
  display: flex;
  align-items: center;
  gap: 3px;
  height: 26px;
  padding: 2px 2px 0 7px;
  border: 1px solid #111;
  border-radius: 6px 6px 0 0;
  background: linear-gradient(#707174, #47484a 8px, #1b1b1c 9px, #151515);
  color: #fff;
}
.dialog h2 { margin-right: auto; font-size: 14px; }
.dialog-body {
  padding: 3px 6px 6px 6px;
  border: solid #777;
  border-width: 0 1px;
  background: linear-gradient(90deg, #f0f0f0, #e2e2e2);
}
.group {
  padding: 7px 8px 10px 7px;
  border: solid #8c8c8c;
  border-width: 0 1px;
  background: #d3d3d3;
  box-shadow: inset 0 2px 3px #aaa;
}
.pick { display: flex; }
.pick-label {
  flex: 1;
  display: flex;
  align-items: center;
  height: 31px;
  padding-left: 6px;
  border-radius: 5px 0 0 5px;
  background: linear-gradient(90deg, #e4a672, #e0b086 40%, #d3d3d3);
}
.pick-label b { margin-right: 5px; padding-top: 5px; color: #d02818; font: bold 20px/12px "Liberation Sans", sans-serif; }
.pick-label span { margin-left: 8px; font-size: 11px; }
.big {
  display: flex;
  align-items: center;
  justify-content: center;
  width: 30px;
  height: 30px;
  border: 1px solid #777;
  border-radius: 4px;
  background: linear-gradient(#eee, #fff);
}
.big svg { width: 24px; height: 24px; }
.big.hot { border-color: #8a6a58; background: linear-gradient(#f3c8a8, #fbe6d6); }
.caption { padding: 5px 0 4px; }
.list + .caption { padding: 4px 0; }
.list { height: 80px; border: 1px solid #666; background: #fff; }
.list.striped {
  height: 100px;
  background: repeating-linear-gradient(#fff 0 19px, #e4e4e4 19px 20px, #f6f6f6 20px 39px, #e4e4e4 39px 40px);
}
.open-row { display: flex; align-items: center; justify-content: space-between; padding: 3px 0; }
.repeat {
  display: flex;
  align-items: center;
  justify-content: space-between;
  width: 100%;
  height: 22px;
  padding: 0 5px 0 8px;
  border: 1px solid #8c8c8c;
  border-bottom-color: #f0f0f0;
  background: #c2c2c2;
  font-weight: bold;
  font-size: 13px;
}
.placement { padding: 7px 8px 9px 7px; }
.field { display: flex; align-items: center; justify-content: space-between; margin-bottom: 5px; }
.combo { position: relative; width: 106px; }
.combo select {
  display: block;
  appearance: none;
  width: 100%;
  height: 19px;
  padding: 0 3px;
  border: 1px solid #555;
  border-radius: 3px;
  background: #fff;
}
.combo i {
  position: absolute;
  right: 1px;
  top: 1px;
  width: 17px;
  height: 17px;
  border: 1px solid #34658e;
  background: linear-gradient(#d8ecfc, #78aee0);
  pointer-events: none;
}
.combo i::after {
  content: "";
  position: absolute;
  left: 2px;
  top: 4px;
  border: 5px solid transparent;
  border-top: 6px solid #101c30;
  border-bottom: 0;
}
.scatter { display: flex; align-items: center; gap: 1px; }
.scatter input {
  appearance: none;
  width: 16px;
  height: 16px;
  border: 1px solid #666;
  border-radius: 2px;
  background: linear-gradient(#d2d2d2, #fafafa);
}
.actions {
  display: flex;
  justify-content: flex-end;
  gap: 7px;
  margin-top: 3px;
  padding: 6px 10px 0;
  border-top: 1px solid #b0b0b0;
}
.actions button {
  width: 52px;
  height: 18px;
  border: 1px solid #aaa;
  border-radius: 3px;
  background: #ececec;
  color: #999;
}
.actions .ready { border-color: #555; background: linear-gradient(#fff, #d4d4d4); color: #000; }

.logo {
  width: 88px;
  height: 32px;
  margin: auto 1px 0 auto;
  font: italic bold 21px "Liberation Serif", serif;
}

.desktop-edge {
  height: 8px;
  border-bottom: 1px solid #2848a0;
  background: #191e1f;
}
```
